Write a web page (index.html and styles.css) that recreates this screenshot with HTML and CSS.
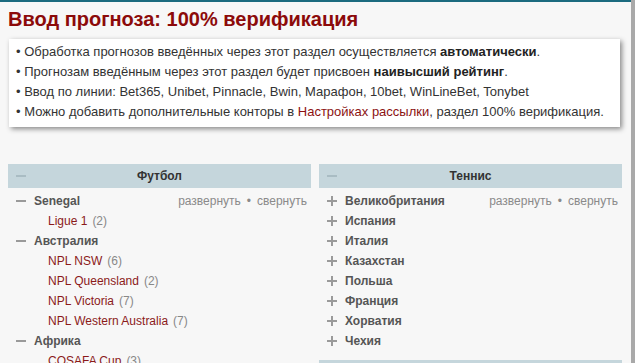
FILE: index.html
```html
<!DOCTYPE html>
<html lang="ru">
<head>
<meta charset="utf-8">
<title>Ввод прогноза: 100% верификация</title>
<link rel="stylesheet" href="styles.css">
</head>
<body>
<div class="page">
  <h1 class="title">Ввод прогноза: 100% верификация</h1>
  <ul class="info">
    <li>• Обработка прогнозов введённых через этот раздел осуществляется <b>автоматически</b>.</li>
    <li>• Прогнозам введённым через этот раздел будет присвоен <b>наивысший рейтинг</b>.</li>
    <li>• Ввод по линии: Bet365, Unibet, Pinnacle, Bwin, Марафон, 10bet, WinLineBet, Tonybet</li>
    <li>• Можно добавить дополнительные конторы в <a class="link" href="#">Настройках рассылки</a>, раздел 100% верификация.</li>
  </ul>

  <div class="columns">
    <div class="col">
      <div class="sport">
        <div class="sport-head">
          <svg class="ico ico-head" viewBox="0 0 10 10"><rect x="0" y="4" width="10" height="2"/></svg>
          <span class="sport-name">Футбол</span>
          <span class="ico-spacer"></span>
        </div>
        <ul class="tree">
          <li class="row country">
            <svg class="ico" viewBox="0 0 10 10"><rect x="0" y="4" width="10" height="2"/></svg>
            <span class="cname">Senegal</span>
            <span class="controls"><span class="ctl">развернуть</span><span class="sep">•</span><span class="ctl">свернуть</span></span>
          </li>
          <li class="row league"><a class="lname" href="#">Ligue 1</a><span class="cnt">(2)</span></li>
          <li class="row country">
            <svg class="ico" viewBox="0 0 10 10"><rect x="0" y="4" width="10" height="2"/></svg>
            <span class="cname">Австралия</span>
          </li>
          <li class="row league"><a class="lname" href="#">NPL NSW</a><span class="cnt">(6)</span></li>
          <li class="row league"><a class="lname" href="#">NPL Queensland</a><span class="cnt">(2)</span></li>
          <li class="row league"><a class="lname" href="#">NPL Victoria</a><span class="cnt">(7)</span></li>
          <li class="row league"><a class="lname" href="#">NPL Western Australia</a><span class="cnt">(7)</span></li>
          <li class="row country">
            <svg class="ico" viewBox="0 0 10 10"><rect x="0" y="4" width="10" height="2"/></svg>
            <span class="cname">Африка</span>
          </li>
          <li class="row league"><a class="lname" href="#">COSAFA Cup</a><span class="cnt">(3)</span></li>
        </ul>
      </div>
    </div>

    <div class="col">
      <div class="sport">
        <div class="sport-head">
          <svg class="ico ico-head" viewBox="0 0 10 10"><rect x="0" y="4" width="10" height="2"/></svg>
          <span class="sport-name">Теннис</span>
          <span class="ico-spacer"></span>
        </div>
        <ul class="tree">
          <li class="row country">
            <svg class="ico" viewBox="0 0 10 10"><rect x="0" y="4" width="10" height="2"/><rect x="4" y="0" width="2" height="10"/></svg>
            <span class="cname">Великобритания</span>
            <span class="controls"><span class="ctl">развернуть</span><span class="sep">•</span><span class="ctl">свернуть</span></span>
          </li>
          <li class="row country"><svg class="ico" viewBox="0 0 10 10"><rect x="0" y="4" width="10" height="2"/><rect x="4" y="0" width="2" height="10"/></svg><span class="cname">Испания</span></li>
          <li class="row country"><svg class="ico" viewBox="0 0 10 10"><rect x="0" y="4" width="10" height="2"/><rect x="4" y="0" width="2" height="10"/></svg><span class="cname">Италия</span></li>
          <li class="row country"><svg class="ico" viewBox="0 0 10 10"><rect x="0" y="4" width="10" height="2"/><rect x="4" y="0" width="2" height="10"/></svg><span class="cname">Казахстан</span></li>
          <li class="row country"><svg class="ico" viewBox="0 0 10 10"><rect x="0" y="4" width="10" height="2"/><rect x="4" y="0" width="2" height="10"/></svg><span class="cname">Польша</span></li>
          <li class="row country"><svg class="ico" viewBox="0 0 10 10"><rect x="0" y="4" width="10" height="2"/><rect x="4" y="0" width="2" height="10"/></svg><span class="cname">Франция</span></li>
          <li class="row country"><svg class="ico" viewBox="0 0 10 10"><rect x="0" y="4" width="10" height="2"/><rect x="4" y="0" width="2" height="10"/></svg><span class="cname">Хорватия</span></li>
          <li class="row country"><svg class="ico" viewBox="0 0 10 10"><rect x="0" y="4" width="10" height="2"/><rect x="4" y="0" width="2" height="10"/></svg><span class="cname">Чехия</span></li>
        </ul>
      </div>
      <div class="sport">
        <div class="sport-head"></div>
      </div>
    </div>
  </div>
</div>
</body>
</html>
```
FILE: styles.css
```css
html, body {
  margin: 0;
  padding: 0;
  height: 100%;
  overflow: hidden;
}
body {
  background: #f7f7f7;
  font-family: "Liberation Sans", Arial, sans-serif;
  border-right: 4px solid #a9a9a9;
  box-sizing: border-box;
}
.page {
  border-top: 2px solid #1b6b7f;
  padding: 5px 9px 0 8px;
  min-height: 100%;
  box-sizing: border-box;
}
.title {
  margin: 0;
  font-size: 20px;
  line-height: 24px;
  font-weight: bold;
  color: #8c0a0a;
}
.info {
  list-style: none;
  margin: 8px 2px 0 1px;
  padding: 3px 7px 5px 7px;
  background: #fff;
  box-shadow: 2px 2px 5px rgba(0, 0, 0, 0.45);
  font-size: 13px;
  line-height: 20px;
  color: #333;
}
.info b { color: #222; }
.link { color: #8c1212; text-decoration: none; }

.columns {
  display: grid;
  grid-template-columns: 1fr 1fr;
  column-gap: 8px;
  margin-top: 37px;
}
.sport + .sport { margin-top: 9px; }
.sport-head {
  display: flex;
  align-items: center;
  height: 24px;
  padding: 0 8px;
  background: #c5d6dc;
  font-size: 12px;
  font-weight: bold;
  color: #333;
}
.sport-name { flex: 1; text-align: center; }
.ico-spacer { width: 10px; }
.ico {
  width: 10px;
  height: 10px;
  flex: none;
  fill: #9a9a9a;
}
.ico-head { fill: #a9bcc3; }

.tree {
  list-style: none;
  margin: 3px 0 0 0;
  padding: 0;
  font-size: 12px;
}
.row {
  display: flex;
  align-items: center;
  height: 20px;
  padding-left: 8px;
  padding-right: 4px;
}
.country .ico { margin-right: 8px; }
.cname { font-weight: bold; color: #555; }
.controls {
  margin-left: auto;
  color: #8a8a8a;
}
.sep { margin: 0 6px; }
.league { padding-left: 40px; }
.lname { color: #8b1a1a; text-decoration: none; }
.cnt { color: #888; margin-left: 5px; }
```
